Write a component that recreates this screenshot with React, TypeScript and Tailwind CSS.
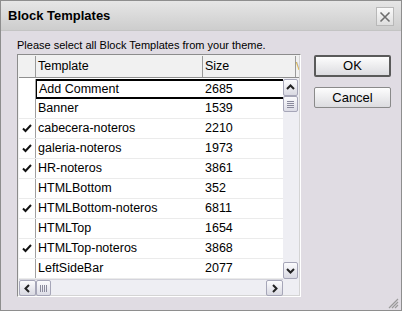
import React from 'react';

const rows: { name: string; size: string; checked: boolean }[] = [
  { name: 'Add Comment', size: '2685', checked: false },
  { name: 'Banner', size: '1539', checked: false },
  { name: 'cabecera-noteros', size: '2210', checked: true },
  { name: 'galeria-noteros', size: '1973', checked: true },
  { name: 'HR-noteros', size: '3861', checked: true },
  { name: 'HTMLBottom', size: '352', checked: false },
  { name: 'HTMLBottom-noteros', size: '6811', checked: true },
  { name: 'HTMLTop', size: '1654', checked: false },
  { name: 'HTMLTop-noteros', size: '3868', checked: true },
  { name: 'LeftSideBar', size: '2077', checked: false },
];

function Check() {
  return (
    <svg width="10" height="9" viewBox="0 0 10 9">
      <path d="M1 4.5 L3.5 7 L9 1" fill="none" stroke="#111" strokeWidth="2" />
    </svg>
  );
}

function Chevron({ dir }: { dir: 'up' | 'down' | 'left' | 'right' }) {
  const d = {
    up: 'M2 7 L5.5 3.5 L9 7',
    down: 'M2 4 L5.5 7.5 L9 4',
    left: 'M7 2 L3.5 5.5 L7 9',
    right: 'M4 2 L7.5 5.5 L4 9',
  }[dir];
  return (
    <svg width="11" height="11" viewBox="0 0 11 11">
      <path d={d} fill="none" stroke="#222" strokeWidth="2" />
    </svg>
  );
}

function ScrollBtn({ dir, className = '' }: { dir: 'up' | 'down' | 'left' | 'right'; className?: string }) {
  return (
    <div
      className={`flex shrink-0 items-center justify-center rounded-[2px] border border-[#a6a6b8] bg-gradient-to-b from-[#fbfbfd] to-[#d9d9e2] ${className}`}
    >
      <Chevron dir={dir} />
    </div>
  );
}

function Grip({ vertical }: { vertical?: boolean }) {
  return (
    <div
      className={`flex shrink-0 items-center justify-center rounded-[2px] border border-[#a6a6b8] bg-gradient-to-b from-[#fbfbfd] to-[#dcdce6] ${
        vertical ? 'h-[16px] w-[15px] flex-col gap-[1px]' : 'h-[16px] w-[15px] flex-row gap-[1px]'
      }`}
    >
      {[0, 1, 2, 3].map((i) =>
        vertical ? (
          <div key={i} className="h-[1px] w-[7px] bg-[#8a8a9c]" />
        ) : (
          <div key={i} className="h-[7px] w-[1px] bg-[#8a8a9c]" />
        )
      )}
    </div>
  );
}

export default function App() {
  return (
    <div className="relative h-[316px] w-[405px] overflow-hidden bg-white font-['Liberation_Sans',Arial,sans-serif]">
      <div className="flex h-[311px] w-[402px] flex-col border border-[#8e8e8e] bg-[#e0dce3]">
        {/* title bar */}
        <div className="flex h-[30px] items-center justify-between border-b border-[#c4c4c4] bg-gradient-to-b from-[#e6e6e6] to-[#cdcdcd] pl-[7px] pr-[7px]">
          <span className="text-[13px] font-bold text-black">Block Templates</span>
          <div className="mt-[2px] flex h-[19px] w-[18px] items-center justify-center border border-[#b8b8b8] bg-gradient-to-b from-[#fafafa] to-[#dedede]">
            <svg width="12" height="12" viewBox="0 0 12 12">
              <path d="M1.5 1.5 L10.5 10.5 M10.5 1.5 L1.5 10.5" stroke="#6e6e6e" strokeWidth="1.6" />
            </svg>
          </div>
        </div>

        {/* body */}
        <div className="flex flex-1 flex-col pl-[16px] pt-[6px]">
          <div className="h-[17px] text-[11px] leading-[17px] text-black">
            Please select all Block Templates from your theme.
          </div>
          <div className="flex gap-[13px]">
            {/* list view */}
            <div className="h-[243px] w-[284px] shrink-0 border border-[#8c8c8c] border-b-white border-r-white">
              <div className="flex h-full w-full flex-col border border-[#f2f2f2] border-b-[#d4d4d4] border-r-[#d4d4d4] bg-white">
                {/* header */}
                <div className="flex h-[22px] shrink-0 overflow-hidden border-b border-[#8f8f8f] bg-[#f1f1f1] text-[12.5px] leading-[21px] text-black">
                  <div className="w-[17px] shrink-0 border-r border-[#9a9a9a]" />
                  <div className="w-[167px] shrink-0 border-r border-[#9a9a9a] pl-[2px]">Template</div>
                  <div className="w-[93px] shrink-0 border-r border-[#9a9a9a] pl-[2px]">Size</div>
                  <div className="shrink-0 text-[10px] text-[#c0a040]">V</div>
                </div>
                <div className="flex flex-1">
                  <div className="flex flex-1 flex-col pt-[1px]">
                    {rows.map((r, i) => (
                      <div
                        key={r.name}
                        className={`flex h-[20px] text-[12.5px] leading-[19px] text-black ${
                          i === 0 ? '' : 'border-b border-[#ebebeb]'
                        }`}
                      >
                        <div className="flex w-[17px] shrink-0 items-center justify-center border-r border-[#a0a0a0]">
                          {r.checked && <Check />}
                        </div>
                        {i === 0 ? (
                          <div className="flex flex-1 border-y-2 border-l border-black">
                            <div className="w-[166px] shrink-0 pl-[2px] leading-[16px]">{r.name}</div>
                            <div className="pl-[2px] leading-[16px]">{r.size}</div>
                          </div>
                        ) : (
                          <>
                            <div className="w-[167px] shrink-0 pl-[2px]">{r.name}</div>
                            <div className="pl-[2px]">{r.size}</div>
                          </>
                        )}
                      </div>
                    ))}
                    {/* horizontal scrollbar */}
                    <div className="mt-auto flex h-[16px] border-t border-[#d4d4dc] bg-[#eeeef3]">
                      <ScrollBtn dir="left" className="h-[16px] w-[17px]" />
                      <Grip />
                      <div className="flex-1" />
                      <ScrollBtn dir="right" className="h-[16px] w-[17px]" />
                    </div>
                  </div>
                  {/* vertical scrollbar */}
                  <div className="flex w-[16px] shrink-0 flex-col bg-[#eeeef3] pb-[16px] pt-[1px]">
                    <ScrollBtn dir="up" className="h-[17px] w-[15px]" />
                    <Grip vertical />
                    <div className="flex-1" />
                    <ScrollBtn dir="down" className="h-[17px] w-[15px]" />
                  </div>
                </div>
              </div>
            </div>

            {/* buttons */}
            <div className="flex flex-col gap-[10px] pt-[1px]">
              <button className="h-[22px] w-[77px] rounded-[2px] border-2 border-[#5a5a5a] bg-gradient-to-b from-[#fdfdfd] to-[#dcdce0] text-[13px] leading-[18px] text-black">
                OK
              </button>
              <button className="h-[21px] w-[77px] rounded-[2px] border border-[#8a8a8a] bg-gradient-to-b from-[#fdfdfd] to-[#dcdce0] text-[13px] leading-[19px] text-black">
                Cancel
              </button>
            </div>
          </div>
          {/* resize grip */}
          <div className="mt-auto flex justify-end pb-[1px] pr-[2px]">
            <svg width="12" height="12" viewBox="0 0 12 12">
              <path d="M11 2 L2 11 M11 5 L5 11 M11 8 L8 11" stroke="#9a9a9a" strokeWidth="1.2" />
            </svg>
          </div>
        </div>
      </div>
    </div>
  );
}
